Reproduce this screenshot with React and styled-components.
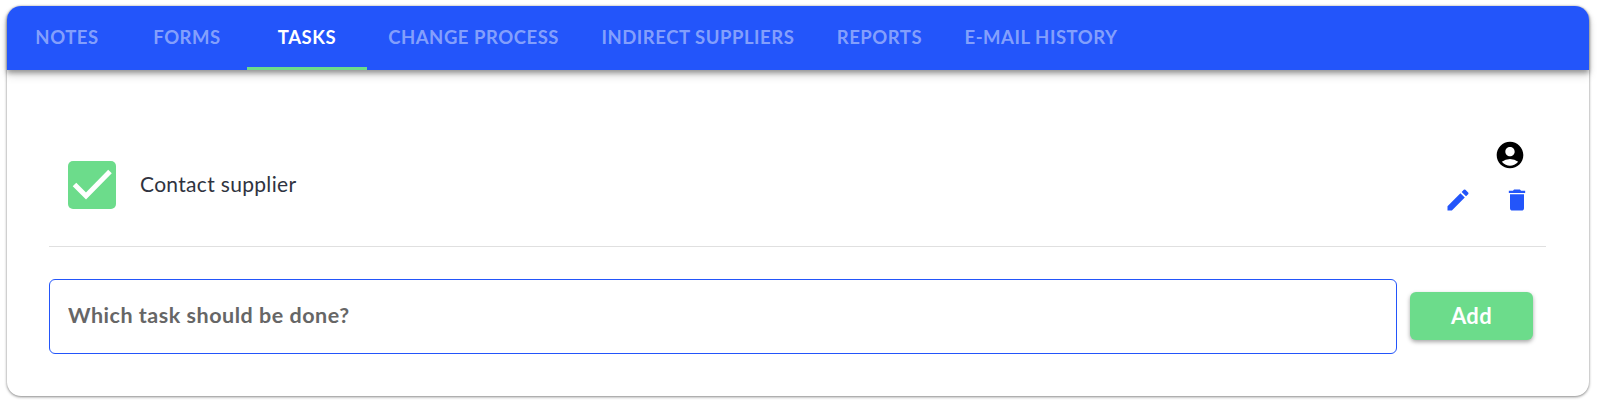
import React from "react";
import styled, { createGlobalStyle } from "styled-components";
import { MdAccountCircle, MdDelete, MdEdit } from "react-icons/md";

const BLUE = "#2355fa";
const GREEN = "#6cdc8b";
const FONT = `"Lato", "Open Sans", "Liberation Sans", sans-serif`;

const tabs = ["Notes", "Forms", "Tasks", "Change process", "Indirect suppliers", "Reports", "E-mail history"];

const GlobalStyle = createGlobalStyle`
  html, body {
    margin: 0;
    background: #fff;
    font-family: ${FONT};
  }
`;

const Page = styled.div`
  padding: 6px 13px 20px 7px;
`;

const Card = styled.section`
  height: 390px;
  box-sizing: border-box;
  border-radius: 14px;
  background: #fff;
  box-shadow: 0 1px 3px rgba(0, 0, 0, 0.45), 0 0 2px rgba(0, 0, 0, 0.12);
  display: flex;
  flex-direction: column;
`;

const TabBar = styled.nav`
  height: 64px;
  flex: none;
  display: flex;
  background: ${BLUE};
  border-radius: 14px 14px 0 0;
  box-shadow: 0 3px 5px rgba(0, 0, 0, 0.35), 0 6px 10px rgba(0, 0, 0, 0.12);
`;

const Tab = styled.a`
  box-sizing: border-box;
  min-width: 120px;
  padding: 0 21.2px;
  display: flex;
  align-items: center;
  justify-content: center;
  font-size: 18.5px;
  font-weight: 700;
  letter-spacing: 0.53px;
  text-transform: uppercase;
  white-space: nowrap;
  color: ${(p) => (p.$active ? "#fff" : "rgba(255, 255, 255, 0.45)")};
  border-bottom: 3px solid ${(p) => (p.$active ? GREEN : "transparent")};
`;

const Content = styled.div`
  padding: 54px 43px 0 42px;
  display: flex;
  flex-direction: column;
`;

const TaskRow = styled.div`
  height: 123px;
  box-sizing: border-box;
  display: flex;
  align-items: center;
  padding: 0 28px 0 19px;
  border-bottom: 1px solid #e0e0e0;
`;

const CheckBox = styled.span`
  width: 48px;
  height: 48px;
  flex: none;
  border-radius: 5px;
  background: ${GREEN};
  display: flex;
  align-items: center;
  justify-content: center;
`;

const TaskLabel = styled.span`
  flex: 1;
  margin-left: 24px;
  margin-top: -4px;
  font-size: 21px;
  letter-spacing: 0.32px;
  color: #2f3340;
`;

const Actions = styled.div`
  align-self: flex-start;
  display: flex;
  flex-direction: column;
  align-items: flex-end;
  padding-top: 15px;
`;

const Owner = styled(MdAccountCircle)`
  width: 32px;
  height: 32px;
  color: #000;
  margin-right: -8px;
`;

const ActionButtons = styled.div`
  display: flex;
  gap: 31px;
  margin-top: 15px;
  margin-right: -13px;
  color: ${BLUE};
  svg {
    display: block;
    width: 28px;
    height: 28px;
  }
`;

const AddRow = styled.form`
  display: flex;
  align-items: center;
  gap: 13px;
  margin-top: 32px;
  padding-right: 13px;
`;

const TaskInput = styled.input`
  flex: 1;
  height: 75px;
  box-sizing: border-box;
  padding: 0 18px 3px;
  border: 1px solid ${BLUE};
  border-radius: 6px;
  outline: none;
  font-family: ${FONT};
  font-size: 21.5px;
  font-weight: 700;
  letter-spacing: 0.52px;
  &::placeholder {
    color: #666;
    opacity: 1;
  }
`;

const AddButton = styled.button`
  width: 123px;
  height: 48px;
  margin-top: -1px;
  padding: 0 0 1px;
  border: none;
  border-radius: 6px;
  background: ${GREEN};
  color: #fff;
  font-family: ${FONT};
  font-size: 22px;
  font-weight: 700;
  letter-spacing: 0.4px;
  box-shadow: 0 2px 4px rgba(0, 0, 0, 0.35);
`;

const App = () => (
  <Page>
    <GlobalStyle />
    <Card>
      <TabBar>
        {tabs.map((tab) => (
          <Tab key={tab} $active={tab === "Tasks"}>
            {tab}
          </Tab>
        ))}
      </TabBar>
      <Content>
        <TaskRow>
          <CheckBox>
            <svg width="42" height="34" viewBox="0 0 42 34" fill="none">
              <path d="M3.5 16.5L15 28L39 3.5" stroke="#fff" strokeWidth="5" />
            </svg>
          </CheckBox>
          <TaskLabel>Contact supplier</TaskLabel>
          <Actions>
            <Owner />
            <ActionButtons>
              <MdEdit />
              <MdDelete />
            </ActionButtons>
          </Actions>
        </TaskRow>
        <AddRow>
          <TaskInput placeholder="Which task should be done?" />
          <AddButton type="button">Add</AddButton>
        </AddRow>
      </Content>
    </Card>
  </Page>
);

export default App;
